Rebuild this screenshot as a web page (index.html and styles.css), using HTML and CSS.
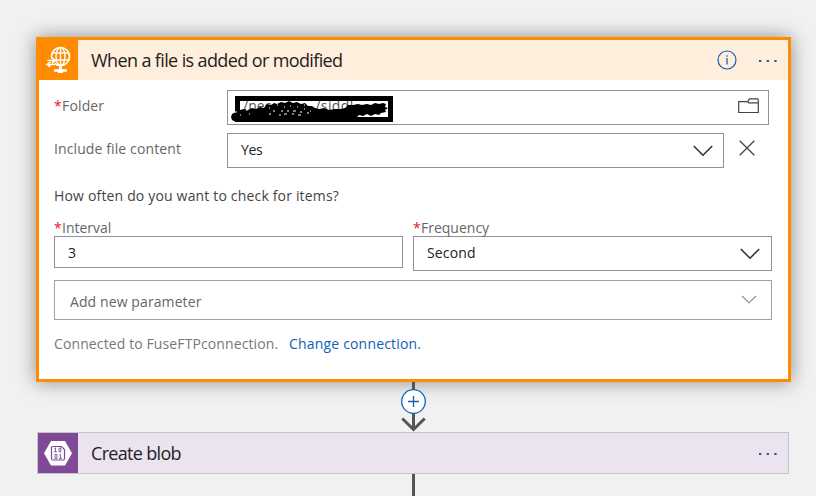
FILE: index.html
```html
<!DOCTYPE html>
<html lang="en">
<head>
<meta charset="utf-8">
<title>Logic app designer</title>
<link rel="stylesheet" href="styles.css">
</head>
<body>
<main class="canvas">
  <section class="card">
    <header class="card-head">
      <div class="brand brand-ftp">
        <svg width="39" height="40" viewBox="0 0 39 40" fill="none" stroke="#fff" stroke-width="1.3">
          <circle cx="21.5" cy="16.500" r="9" stroke-width="1.6"/>
          <ellipse cx="21.5" cy="16.500" rx="4.5" ry="9"/>
          <path d="M21.5 7.5v18M13 13h17M12.500 20h18"/>
          <path d="M7 18.500h9v8H7z" fill="#ff8c00" stroke="none"/>
          <path d="M8.500 20.500h8M13 17.800l3.500 2.700-3.500 2.700M16 24.500H8.500M11.500 21.800l-3.500 2.700 3.500 2.700" stroke-width="1.500"/>
          <path d="M21.500 25.500v5" stroke-width="3"/>
          <path d="M15 30.500h13" stroke-width="2.500"/>
          <path d="M19 31.500h5" stroke-width="3"/>
        </svg>
      </div>
      <h1 class="title title-trigger">When a file is added or modified</h1>
      <svg class="info" width="20" height="20" viewBox="0 0 20 20" fill="none" stroke="#1160b7">
        <circle cx="10" cy="10" r="9" stroke-width="1.200"/>
        <path d="M10 8v6.500M10 5.300v1.400" stroke-width="1.300"/>
      </svg>
      <svg class="dots" width="20" height="4" viewBox="0 0 20 4" fill="#1160b7"><path d="M1 2h2.300v2H1zM8.700 2H11v2H8.700zM16.300 2h2.300v2h-2.300z"/></svg>
    </header>
    <div class="card-body">
      <div class="row row-folder">
        <label class="label"><b class="req">*</b><span class="t-folder">Folder</span></label>
        <div class="field field-folder">
          <span class="path">/nec</span><span class="path path-end">/siddl</span>
          <svg class="redaction" width="164" height="30" viewBox="0 0 164 30">
            <path d="M6.500 2.500h153v21h-153z" fill="none" stroke="#000" stroke-width="5"/>
            <path d="M0 21L1 18 5 16 9 14 13 13 17 14 21 12 25 13 29 11 33 12 36 8 40 9 43 7 46 8 50 6 54 7 58 5 62 7 66 6 70 8 74 7 77 10 81 10 84 12 88 13 93 12 98 14 104 13 110 13 114 12 117 9 122 9 127 8 131 9 136 8 140 9 144 7 148 8 152 7 155 8 154 11 157 12 154 14 155 16 150 17 148 19 144 18 140 20 136 18 132 20 128 19 125 22 125 26H5L1 24z" fill="#000"/>
            <path d="M38 12h1m3 3h2m-6 3h2m6-9h1m3 6h2m-4 4h2m3-8h1m2 4h2m-5 3h3m3-8h1m2 5h3m-4 3h2m3-7h1m2 5h2m-4 3h3m3-6h1m2 4h2m-5-8h1m5 6h1m-62 3h1m-4-4h2m-8 5h1m-6-3h2" fill="none" stroke="#fff" stroke-width="1.100"/>
          </svg>
          <svg class="folder" width="21" height="16" viewBox="0 0 21 16" fill="none" stroke="#444" stroke-width="1.200"><path d="M.7 3.700h9l1.700-2.800h8.200l.7 1V14.500H.7zM9.700 3.700l1 1.200h9.500"/></svg>
        </div>
      </div>
      <div class="row row-include">
        <label class="label t-include">Include file content</label>
        <div class="field select">
          <span class="t-yes">Yes</span>
          <svg class="chev" width="20" height="12" viewBox="0 0 20 12"><path d="M.800 1l9.200 9.200L19.200 1"/></svg>
        </div>
        <svg class="close" width="16" height="16" viewBox="0 0 16 16"><path d="M.700.700l14.600 14.600M15.300.700L.700 15.300"/></svg>
      </div>
      <p class="question"><span class="t-question">How often do you want to check for items?</span></p>
      <div class="recurrence">
        <div class="col col-interval">
          <label class="top-label"><b class="req">*</b><span class="t-interval">Interval</span></label>
          <div class="field number"><span>3</span></div>
        </div>
        <div class="col col-frequency">
          <label class="top-label"><b class="req">*</b><span class="t-frequency">Frequency</span></label>
          <div class="field frequency"><span class="t-second">Second</span>
            <svg class="chev" width="20" height="12" viewBox="0 0 20 12"><path d="M.800 1l9.200 9.200L19.200 1"/></svg>
          </div>
        </div>
      </div>
      <div class="field parameter"><span class="t-parameter">Add new parameter</span>
        <svg class="chev chev-small" width="16" height="9" viewBox="0 0 16 9"><path d="M1 1l7 6.800L15 1"/></svg>
      </div>
      <p class="connection"><span class="t-connected">Connected to FuseFTPconnection.</span><a class="change">Change connection.</a></p>
    </div>
  </section>
  <svg class="connector" width="26" height="50" viewBox="0 0 26 50" fill="none">
    <path d="M13.500 0v47" stroke="#555" stroke-width="3"/>
    <path d="M2.300 36.500L13.500 47.500l11.200-11" stroke="#555" stroke-width="3"/>
    <circle cx="13.500" cy="19.500" r="11.800" fill="#fff" stroke="#1160b7" stroke-width="1.300"/>
    <path d="M8 19.500h11M13.500 14v11" stroke="#1160b7" stroke-width="1.300"/>
  </svg>
  <section class="action">
    <div class="brand brand-blob">
      <svg width="40" height="40" viewBox="0 0 40 40">
        <path d="M13 8h14l7 12.300-7 12.200H13L6 20.300z" fill="#fff"/>
        <path d="M14.500 13.500h9l3 3v9q0 1.500-1.500 1.500H15q-1.500 0-1.500-1.500v-11q0-1 1-1z" fill="none" stroke="#804998" stroke-width="1.200"/>
        <path d="M16.500 15.500l1-.7v4M16 18.800h3M21 15h1.800v3.800H21zM17 21.500h2v4h-2zM21.500 22l1-.7v4M21 25.300h3" fill="none" stroke="#804998" stroke-width=".9"/>
      </svg>
    </div>
    <h2 class="title title-blob">Create blob</h2>
    <svg class="dots" width="20" height="4" viewBox="0 0 20 4" fill="#1160b7"><path d="M1 2h2.300v2H1zM8.700 2H11v2H8.700zM16.300 2h2.300v2h-2.300z"/></svg>
  </section>
  <div class="tail"></div>
</main>
</body>
</html>
```
FILE: styles.css
```css
* { box-sizing: border-box; }
body { margin: 0; background: #f1f1f1; font-family: "Open Sans", "Noto Sans", sans-serif; font-size: 14px; line-height: 20px; color: #333; }
h1, h2, p { margin: 0; font-weight: 400; }
span, label, a, h1, h2 { white-space: nowrap; }
svg { display: block; flex: none; }
.canvas { width: 816px; height: 496px; padding: 37px 25px 0 36px; overflow: hidden; }
.card { height: 345px; border: 3px solid #ff8c00; background: #fff; box-shadow: 0 0 18px rgba(0, 0, 0, .42); }
.card-head { display: flex; align-items: center; height: 40px; background: #ffeedb; padding-right: 10px; }
.brand { flex: none; height: 40px; }
.brand-ftp { width: 39px; background: #ff8c00; }
.title { flex: 1; margin-left: 13px; font-size: 18px; line-height: 24px; color: #222; }
.title-trigger { letter-spacing: -.62px; }
.title-blob { letter-spacing: -.68px; }
.info { margin-right: 21px; }
.card-body { padding: 10px 16px 0 15px; }
.row { display: flex; }
.row-folder { height: 43px; }
.row-include { height: 35px; }
.label { width: 173px; padding-top: 6px; color: #666; }
.req { display: inline-block; width: 8px; color: #e81123; font-weight: 400; }
.field { display: flex; align-items: center; border: 1px solid #919191; background: #fff; color: #222; }
.field-folder { position: relative; width: 542px; height: 35px; padding: 0 9px 3px 15px; color: #555; }
.path-end { margin-left: 44px; letter-spacing: .4px; }
.redaction { position: absolute; left: 3px; top: 5px; }
.folder { margin-left: auto; }
.select { width: 497px; height: 35px; padding: 0 10px 0 13px; }
.t-yes { letter-spacing: -.3px; }
.t-folder, .t-second { letter-spacing: .15px; }
.t-yes, .t-second { margin-top: -2px; }
.chev { margin-left: auto; fill: none; stroke: #333; stroke-width: 1.6; }
.close { margin: 7px 0 0 15px; fill: none; stroke: #444; stroke-width: 1.3; }
.question { margin-top: 18px; line-height: 20px; color: #444; }
.recurrence { display: flex; gap: 10px; margin-top: 12px; }
.col-interval { width: 349px; }
.col-frequency { width: 359px; }
.top-label { display: block; height: 18px; color: #666; }
.number { height: 32px; padding: 1px 0 0 13px; }
.frequency { height: 35px; padding: 0 11px 0 13px; }
.parameter { width: 718px; height: 40px; margin-top: 9px; padding: 3px 14px 0 15px; border-color: #a0a0a0; color: #666; }
.chev-small { stroke: #888; stroke-width: 1.1; margin-top: -5px; }
.connection { display: flex; margin-top: 14px; color: #777; }
.t-connected { width: 235px; letter-spacing: .11px; }
.change { color: #1160b7; letter-spacing: .18px; }
.t-parameter { letter-spacing: .1px; }
.t-question { letter-spacing: .17px; }
.t-include { letter-spacing: .11px; }
.connector { position: relative; margin-left: 364px; }
.action { display: flex; align-items: center; width: 752px; height: 42px; margin-left: 1px; padding-right: 10px; border: 1px solid #c6c6c6; background: #ebe3ef; }
.brand-blob { width: 40px; background: #804998; }
.action .title { margin-left: 13px; }
.tail { width: 3px; height: 22px; margin-left: 376px; background: #555; }
```
